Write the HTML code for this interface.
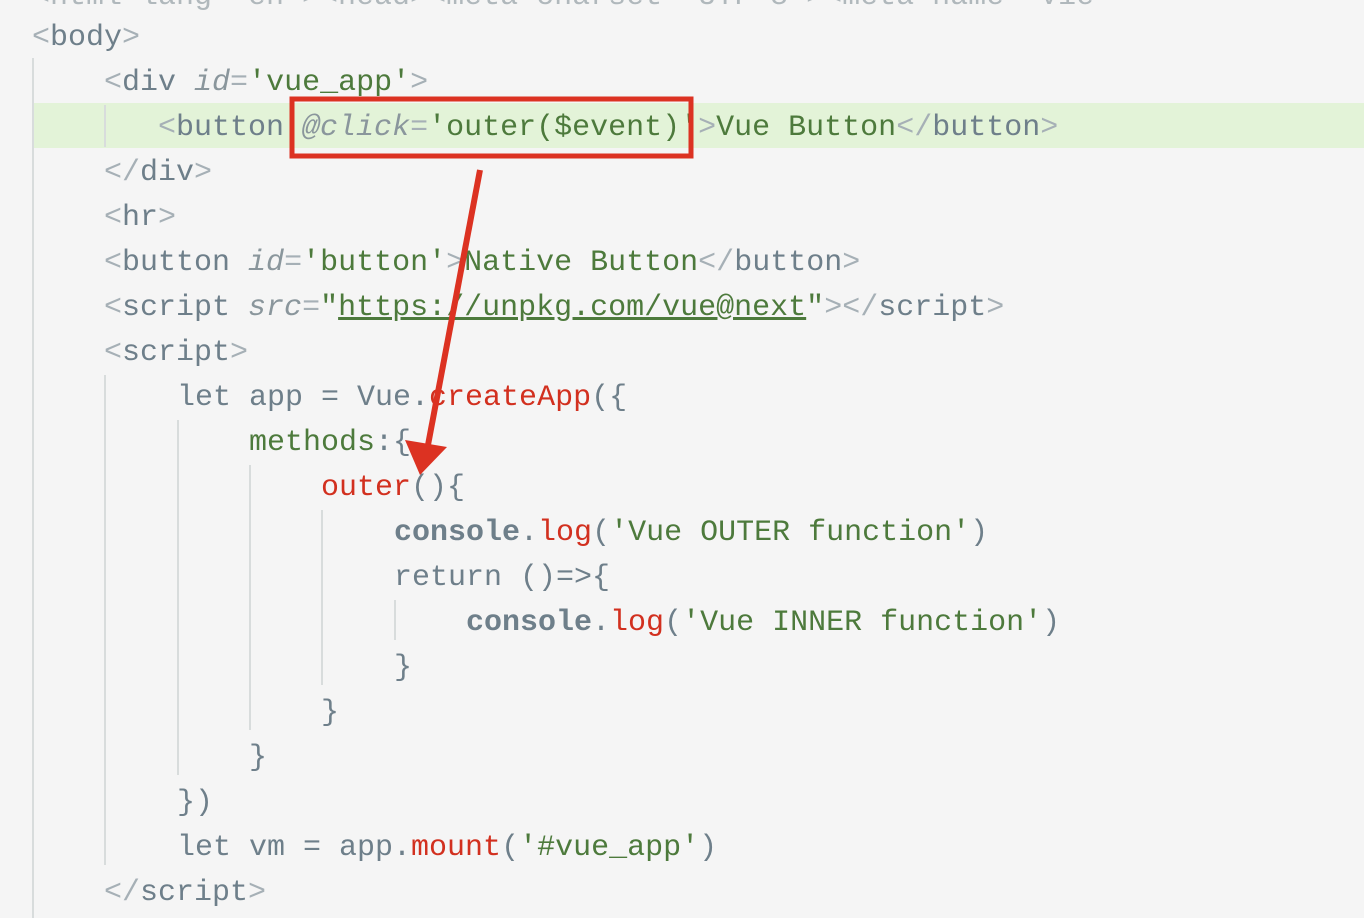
<!DOCTYPE html>
<html><head><meta charset="utf-8"><style>
body{margin:0;width:1364px;height:918px;background:#f5f5f5;overflow:hidden;position:relative;font-family:"Liberation Mono",monospace;font-size:30px}
.l{position:absolute;white-space:pre;line-height:45px;height:45px;color:#6e7f8a}
.t{color:#a6b0b6}.s{color:#4d7a3c}.i{font-style:italic;color:#8a969c}.r{color:#d2301f}.b{font-weight:bold;color:#6e7f8a}
.g{position:absolute;width:2px;background:#d8dcdc}
</style></head><body>
<div style="position:absolute;left:32px;top:103px;width:1332px;height:45px;background:#e3f3d8"></div>
<div class="g" style="left:32px;top:58px;height:860px"></div>
<div class="g" style="left:104px;top:105px;height:42px"></div>
<div class="g" style="left:104px;top:375px;height:490px"></div>
<div class="g" style="left:177px;top:420px;height:355px"></div>
<div class="g" style="left:249px;top:465px;height:265px"></div>
<div class="g" style="left:321px;top:510px;height:175px"></div>
<div class="g" style="left:394px;top:600px;height:40px"></div>
<div class="l" style="left:32px;top:-25px;color:#b0b8bc">&lt;html lang="en"&gt;&lt;head&gt;&lt;meta charset="UTF-8"&gt;&lt;meta name="vie</div>
<div class="l" style="left:32px;top:16px"><span class="t">&lt;</span>body<span class="t">&gt;</span></div>
<div class="l" style="left:104px;top:61px"><span class="t">&lt;</span>div <span class="i">id</span><span class="t">=</span><span class="s">'vue_app'</span><span class="t">&gt;</span></div>
<div class="l" style="left:158px;top:106px"><span class="t">&lt;</span>button <span class="i">@click</span><span class="t">=</span><span class="s">'outer($event)'</span><span class="t">&gt;</span><span class="s">Vue Button</span><span class="t">&lt;/</span>button<span class="t">&gt;</span></div>
<div class="l" style="left:104px;top:151px"><span class="t">&lt;/</span>div<span class="t">&gt;</span></div>
<div class="l" style="left:104px;top:196px"><span class="t">&lt;</span>hr<span class="t">&gt;</span></div>
<div class="l" style="left:104px;top:241px"><span class="t">&lt;</span>button <span class="i">id</span><span class="t">=</span><span class="s">'button'</span><span class="t">&gt;</span><span class="s">Native Button</span><span class="t">&lt;/</span>button<span class="t">&gt;</span></div>
<div class="l" style="left:104px;top:286px"><span class="t">&lt;</span>script <span class="i">src</span><span class="t">=</span><span class="s">"<u>https://unpkg.com/vue@next</u>"</span><span class="t">&gt;&lt;/</span>script<span class="t">&gt;</span></div>
<div class="l" style="left:104px;top:331px"><span class="t">&lt;</span>script<span class="t">&gt;</span></div>
<div class="l" style="left:177px;top:376px">let app = Vue.<span class="r">createApp</span>({</div>
<div class="l" style="left:249px;top:421px"><span class="s">methods</span>:{</div>
<div class="l" style="left:321px;top:466px"><span class="r">outer</span>(){</div>
<div class="l" style="left:394px;top:511px"><span class="b">console</span>.<span class="r">log</span>(<span class="s">'Vue OUTER function'</span>)</div>
<div class="l" style="left:394px;top:556px">return ()=&gt;{</div>
<div class="l" style="left:466px;top:601px"><span class="b">console</span>.<span class="r">log</span>(<span class="s">'Vue INNER function'</span>)</div>
<div class="l" style="left:394px;top:646px">}</div>
<div class="l" style="left:321px;top:691px">}</div>
<div class="l" style="left:249px;top:736px">}</div>
<div class="l" style="left:177px;top:781px">})</div>
<div class="l" style="left:177px;top:826px">let vm = app.<span class="r">mount</span>(<span class="s">'#vue_app'</span>)</div>
<div class="l" style="left:104px;top:871px"><span class="t">&lt;/</span>script<span class="t">&gt;</span></div>
<svg style="position:absolute;left:0;top:0" width="1364" height="918">
<rect x="292" y="99" width="399" height="57" fill="none" stroke="#dc3222" stroke-width="5"/>
<line x1="480" y1="170" x2="428" y2="445" stroke="#dc3222" stroke-width="6"/>
<polygon points="405,440 447,447 420,475" fill="#dc3222"/>
</svg>
</body></html>
